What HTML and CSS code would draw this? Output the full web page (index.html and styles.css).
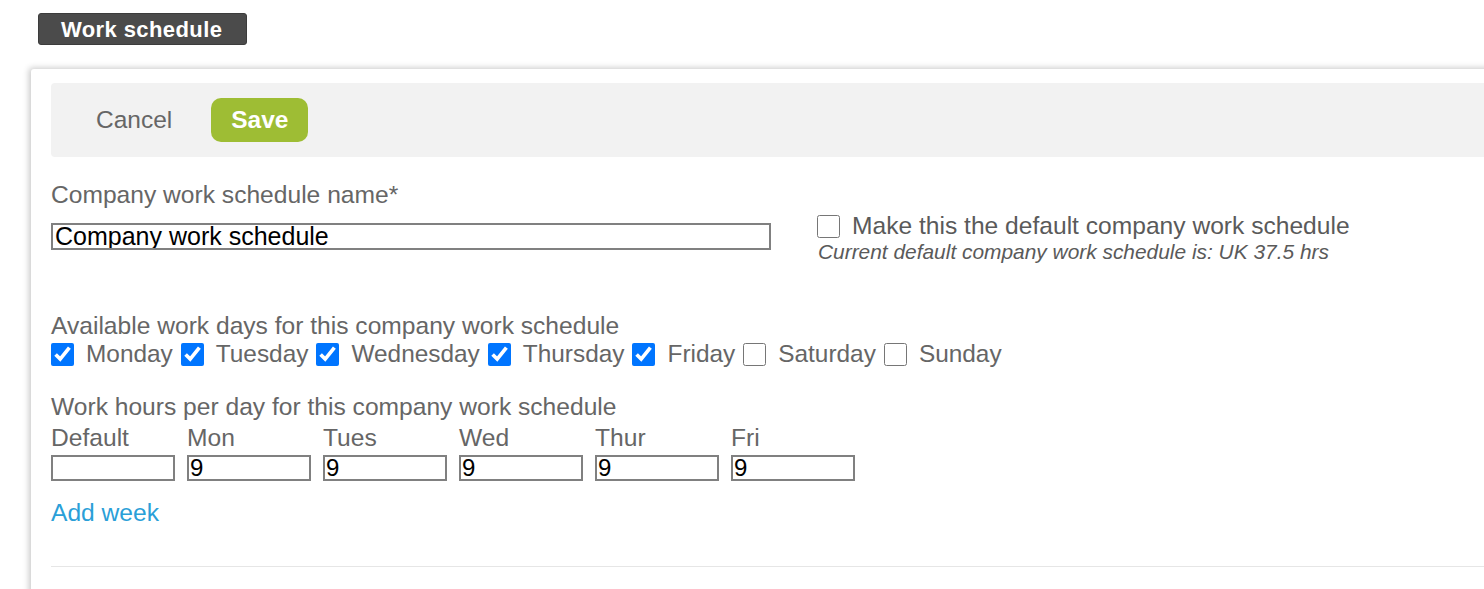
FILE: index.html
```html
<!DOCTYPE html>
<html lang="en">

<head>
  <meta charset="UTF-8">
  <meta name="viewport" content="width=device-width, initial-scale=1.0">
  <title>Work schedule</title>
  <link rel="stylesheet" href="styles.css">
</head>

<body>
  <div class="page">
    <div class="badge">Work schedule</div>

    <div class="card">
      <div class="toolbar">
        <button type="button" class="btn-cancel">Cancel</button>
        <button type="button" class="btn-save">Save</button>
      </div>

      <div class="name-row">
        <div class="name-col">
          <label class="field-label" for="schedule-name">Company work schedule name*</label>
          <input type="text" id="schedule-name" class="name-input" value="Company work schedule">
        </div>
        <div class="default-col">
          <label class="default-check">
            <input type="checkbox">
            <span>Make this the default company work schedule</span>
          </label>
          <p class="hint">Current default company work schedule is: UK 37.5 hrs</p>
        </div>
      </div>

      <div class="section days">
        <div class="field-label">Available work days for this company work schedule</div>
        <div class="day-list">
          <label class="day"><input type="checkbox" checked><span>Monday</span></label>
          <label class="day"><input type="checkbox" checked><span>Tuesday</span></label>
          <label class="day"><input type="checkbox" checked><span>Wednesday</span></label>
          <label class="day"><input type="checkbox" checked><span>Thursday</span></label>
          <label class="day"><input type="checkbox" checked><span>Friday</span></label>
          <label class="day"><input type="checkbox"><span>Saturday</span></label>
          <label class="day"><input type="checkbox"><span>Sunday</span></label>
        </div>
      </div>

      <div class="section hours">
        <div class="field-label">Work hours per day for this company work schedule</div>
        <div class="hours-grid">
          <div class="hour-col">
            <span class="hour-label">Default</span>
            <input type="text" class="hour-input" value="">
          </div>
          <div class="hour-col">
            <span class="hour-label">Mon</span>
            <input type="text" class="hour-input" value="9">
          </div>
          <div class="hour-col">
            <span class="hour-label">Tues</span>
            <input type="text" class="hour-input" value="9">
          </div>
          <div class="hour-col">
            <span class="hour-label">Wed</span>
            <input type="text" class="hour-input" value="9">
          </div>
          <div class="hour-col">
            <span class="hour-label">Thur</span>
            <input type="text" class="hour-input" value="9">
          </div>
          <div class="hour-col">
            <span class="hour-label">Fri</span>
            <input type="text" class="hour-input" value="9">
          </div>
        </div>
      </div>

      <a href="#" class="add-week">Add week</a>

      <hr class="divider">
    </div>
  </div>
</body>

</html>
```

FILE: styles.css
```css
/* Global Styles */
body {
  font-family: 'Liberation Sans', Arial, sans-serif;
  background: #ffffff;
  color: #666666;
  margin: 0;
  padding: 0;
  overflow: hidden;
}

.page {
  padding: 13px 0 0 31px;
}

/* Title badge */
.badge {
  display: inline-block;
  margin-left: 7px;
  width: 209px;
  height: 32px;
  box-sizing: border-box;
  padding-left: 22px;
  line-height: 31px;
  background: #4b4b4b;
  border: 1px solid #3c3c3c;
  border-radius: 3px;
  color: #ffffff;
  font-size: 22px;
  font-weight: bold;
  letter-spacing: 0.4px;
}

/* Card */
.card {
  margin-top: 24px;
  margin-right: -40px;
  padding: 14px 0 40px 20px;
  background: #ffffff;
  border-top-left-radius: 3px;
  box-shadow: -2px -1px 6px rgba(0, 0, 0, 0.22);
}

/* Toolbar */
.toolbar {
  display: flex;
  align-items: center;
  gap: 39px;
  height: 74px;
  padding-left: 45px;
  background: #f2f2f2;
  border-radius: 4px;
}

.toolbar button {
  font-family: inherit;
  font-size: 24.5px;
  border: none;
  cursor: pointer;
}

.btn-cancel {
  background: none;
  color: #666666;
  padding: 0;
}

.btn-save {
  height: 44px;
  padding: 0 20px;
  background: #9ebd34;
  color: #ffffff;
  font-weight: bold;
  border-radius: 10px;
}

/* Name row */
.name-row {
  display: flex;
  margin-top: 24px;
}

.name-col {
  width: 720px;
}

.field-label {
  display: block;
  font-size: 24.6px;
  line-height: 28px;
}

.name-input {
  display: block;
  box-sizing: border-box;
  width: 720px;
  height: 27px;
  margin-top: 14px;
  padding: 0 2px;
  border: 2px solid #808080;
  font-family: inherit;
  font-size: 25px;
  color: #000000;
}

.default-col {
  margin-left: 46px;
  padding-top: 31px;
}

.default-check {
  display: flex;
  align-items: center;
  font-size: 24.6px;
  line-height: 28px;
  color: #5a5a5a;
}

.hint {
  margin: 0;
  padding-left: 1px;
  font-size: 20.9px;
  line-height: 24px;
  font-style: italic;
  color: #5a5a5a;
}

input[type="checkbox"] {
  width: 23px;
  height: 23px;
  margin: 0 12px 0 0;
}

/* Days */
.section.days {
  margin-top: 48px;
}

.day-list {
  display: flex;
  align-items: center;
}

.day {
  display: flex;
  align-items: center;
  margin-right: 8px;
  font-size: 24.4px;
  line-height: 28px;
}

/* Hours */
.section.hours {
  margin-top: 25px;
}

.hours-grid {
  display: flex;
  gap: 12px;
  margin-top: 3px;
}

.hour-col {
  display: flex;
  flex-direction: column;
  width: 124px;
}

.hour-label {
  font-size: 24.6px;
  line-height: 28px;
}

.hour-input {
  box-sizing: border-box;
  width: 124px;
  height: 26px;
  margin-top: 3px;
  padding: 0 1px;
  border: 2px solid #808080;
  font-family: inherit;
  font-size: 24px;
  color: #000000;
}

/* Footer link and divider */
.add-week {
  display: inline-block;
  margin-top: 18px;
  font-size: 24.6px;
  line-height: 28px;
  color: #2a9fd8;
  text-decoration: none;
}

.divider {
  margin: 39px 0 0;
  border: none;
  border-top: 1px solid #e6e6e6;
}
```
